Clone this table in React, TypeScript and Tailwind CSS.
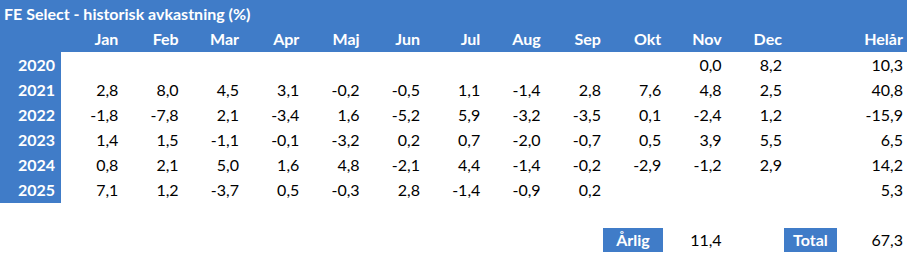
import React from "react";

const months = ["Jan","Feb","Mar","Apr","Maj","Jun","Jul","Aug","Sep","Okt","Nov","Dec"];
const rows: { year: string; vals: string[]; total: string }[] = [
  { year: "2020", vals: ["","","","","","","","","","","0,0","8,2"], total: "10,3" },
  { year: "2021", vals: ["2,8","8,0","4,5","3,1","-0,2","-0,5","1,1","-1,4","2,8","7,6","4,8","2,5"], total: "40,8" },
  { year: "2022", vals: ["-1,8","-7,8","2,1","-3,4","1,6","-5,2","5,9","-3,2","-3,5","0,1","-2,4","1,2"], total: "-15,9" },
  { year: "2023", vals: ["1,4","1,5","-1,1","-0,1","-3,2","0,2","0,7","-2,0","-0,7","0,5","3,9","5,5"], total: "6,5" },
  { year: "2024", vals: ["0,8","2,1","5,0","1,6","4,8","-2,1","4,4","-1,4","-0,2","-2,9","-1,2","2,9"], total: "14,2" },
  { year: "2025", vals: ["7,1","1,2","-3,7","0,5","-0,3","2,8","-1,4","-0,9","0,2","","",""], total: "5,3" },
];

export default function App() {
  return (
    <div className="w-[907px] h-[255px] bg-white overflow-hidden text-[16px] leading-none" style={{ fontFamily: "Lato, 'Open Sans', sans-serif" }}>
      <div className="grid grid-cols-[61px_repeat(12,60.33px)_53px_69px]">
        {/* title row */}
        <div className="col-span-15 h-[26px] bg-[#407CC8] text-white font-bold flex items-center pl-[4px] pt-[1px]">
          FE Select - historisk avkastning (%)
        </div>
        {/* months row */}
        <div className="h-[26px] bg-[#407CC8]" />
        {months.map((m) => (
          <div key={m} className="h-[26px] bg-[#407CC8] text-white font-bold flex items-center justify-end pr-[3px]">{m}</div>
        ))}
        <div className="h-[26px] bg-[#407CC8]" />
        <div className="h-[26px] bg-[#407CC8] text-white font-bold flex items-center justify-end pr-[4px]">Helår</div>
        {rows.map((r) => (
          <React.Fragment key={r.year}>
            <div className="h-[25.17px] bg-[#407CC8] text-white font-bold flex items-center justify-end pr-[6px]">{r.year}</div>
            {r.vals.map((v, i) => (
              <div key={i} className="h-[25.17px] text-black flex items-center justify-end pr-[3px]">{v}</div>
            ))}
            <div className="h-[25.17px]" />
            <div className="h-[25.17px] text-black flex items-center justify-end pr-[4px]">{r.total}</div>
          </React.Fragment>
        ))}
        {/* empty row */}
        <div className="col-span-15 h-[25px]" />
        {/* summary row */}
        <div className="col-span-10 h-[25px]" />
        <div className="h-[25px] flex items-center">
          <div className="ml-[-1px] w-[60px] h-[24px] bg-[#407CC8] text-white font-bold flex items-center justify-center">Årlig</div>
        </div>
        <div className="h-[25px] text-black flex items-center justify-end pr-[3px]">11,4</div>
        <div className="h-[25px]" />
        <div className="h-[25px] flex items-center">
          <div className="ml-[-1px] w-[53px] h-[24px] bg-[#407CC8] text-white font-bold flex items-center justify-center">Total</div>
        </div>
        <div className="h-[25px] text-black flex items-center justify-end pr-[4px]">67,3</div>
      </div>
    </div>
  );
}
